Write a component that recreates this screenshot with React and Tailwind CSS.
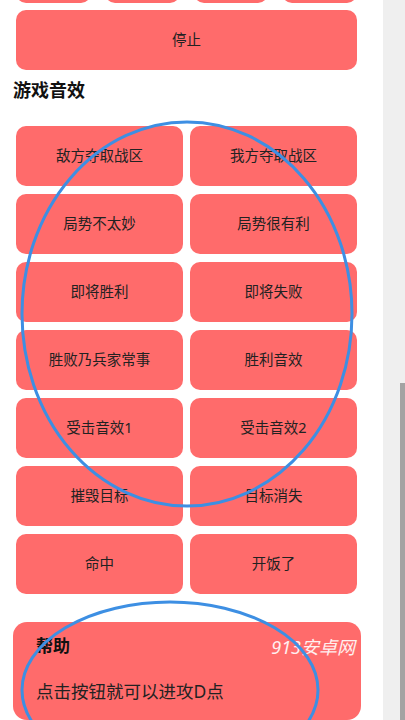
import React from 'react';

const topRow = ['', '', '', ''];

const sounds = [
  '敌方夺取战区',
  '我方夺取战区',
  '局势不太妙',
  '局势很有利',
  '即将胜利',
  '即将失败',
  '胜败乃兵家常事',
  '胜利音效',
  '受击音效1',
  '受击音效2',
  '摧毁目标',
  '目标消失',
  '命中',
  '开饭了',
];

const SoundButton = ({ label, className = '' }) => (
  <button
    className={`h-[60px] rounded-[10px] bg-[#ff6b6b] text-[14.5px] text-[#222] flex items-center justify-center ${className}`}
  >
    {label}
  </button>
);

const App = () => {
  return (
    <div
      className="flex w-[405px] h-[720px] overflow-hidden bg-white"
      style={{ fontFamily: '"Noto Sans", "Noto Sans CJK SC", sans-serif' }}
    >
      {/* Page */}
      <div className="relative w-[383px] flex flex-col">
        {/* Previous section, scrolled off */}
        <div className="px-[16px] w-[373px]">
          <div className="grid grid-cols-4 gap-[14px] mt-[-57px]">
            {topRow.map((t, i) => (
              <SoundButton key={i} label={t} />
            ))}
          </div>
          <SoundButton label="停止" className="w-full mt-[7px]" />
        </div>

        <h2 className="mt-[8px] ml-[13px] text-[18px] leading-[24px] font-bold text-[#111]">游戏音效</h2>

        {/* Sound grid */}
        <div className="grid grid-cols-2 gap-x-[7px] gap-y-[8px] mt-[24px] px-[16px] w-[373px]">
          {sounds.map((s) => (
            <SoundButton key={s} label={s} />
          ))}
        </div>

        {/* Help card */}
        <div className="relative mt-[28px] ml-[13px] w-[348px] h-[140px] rounded-[14px] bg-[#ff6b6b] px-[23px] pt-[12px]">
          <div className="text-[17px] leading-[24px] font-bold text-[#111]">帮助</div>
          <p className="mt-[21px] text-[17.5px] leading-[24px] text-[#222]">点击按钮就可以进攻D点</p>
          <span className="absolute right-[6px] top-[13px] text-[18px] leading-[24px] italic text-white/90">
            913安卓网
          </span>
        </div>

        {/* Annotation rings */}
        <svg
          className="absolute inset-0 pointer-events-none"
          width="383"
          height="720"
          viewBox="0 0 383 720"
        >
          <ellipse cx="187" cy="314" rx="165" ry="192" fill="none" stroke="#3d8fe3" strokeWidth="3" />
          <ellipse cx="170" cy="690" rx="148" ry="88" fill="none" stroke="#3d8fe3" strokeWidth="3" />
        </svg>
      </div>

      {/* Scrollbar */}
      <div className="w-[22px] bg-[#efefef] flex justify-end pt-[383px]">
        <div className="w-[5px] bg-[#a3a3a3]" />
      </div>
    </div>
  );
};

export default App;
